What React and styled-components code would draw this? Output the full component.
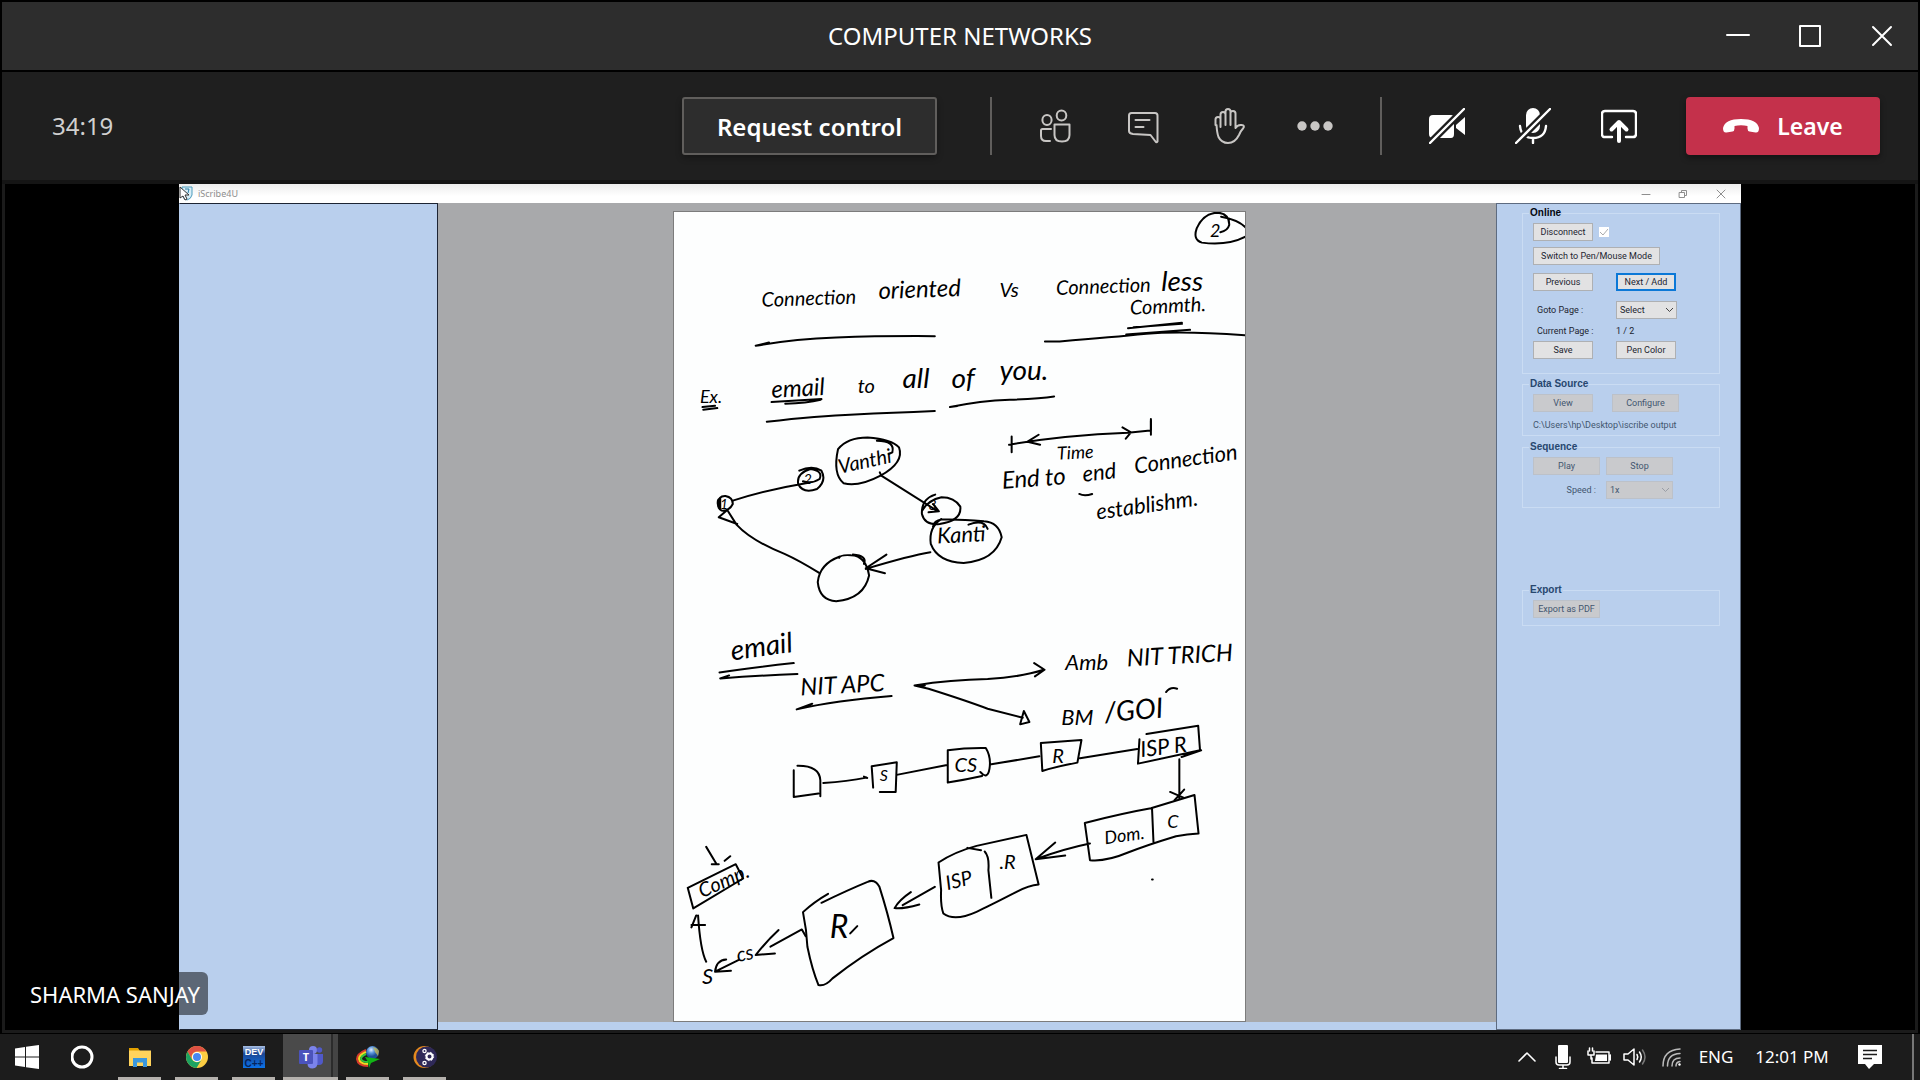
import React from "react";
import styled, { createGlobalStyle, css } from "styled-components";

const ui = `"Noto Sans", "Open Sans", sans-serif`;
const forms = `Roboto, "Liberation Sans", sans-serif`;

const GlobalStyle = createGlobalStyle`
  *, *::before, *::after { box-sizing: border-box; }
  body { margin: 0; background: #000; font-family: ${ui}; }
  button, input, select { font: inherit; margin: 0; }
  svg { display: block; }
`;

/* ---------- shell ---------- */

const Screen = styled.div`
  height: 100vh;
  display: flex;
  flex-direction: column;
  overflow: hidden;
  color: #fff;
`;

const Meeting = styled.div`
  flex: 1;
  min-height: 0;
  display: flex;
  flex-direction: column;
  padding: 2px 2px 1px;
`;

const TitleBar = styled.header`
  height: 68px;
  display: grid;
  grid-template-columns: 1fr auto 1fr;
  align-items: center;
  background: #2d2d2d;
`;

const Title = styled.h1`
  grid-column: 2;
  margin: 0;
  font-size: 24px;
  line-height: 32px;
  font-weight: 400;
`;

const WindowButtons = styled.div`
  justify-self: end;
  display: flex;
`;

const BareButton = styled.button`
  display: flex;
  align-items: center;
  justify-content: center;
  padding: 0;
  border: 0;
  background: none;
  color: inherit;
`;

const WindowButton = styled(BareButton)`
  width: ${(p) => p.$w}px;
  height: ${(p) => p.$h}px;
`;

const Toolbar = styled.div`
  height: 112px;
  margin-top: 2px;
  padding: 0 38px 0 50px;
  display: flex;
  align-items: center;
  background: #1f1f1f;
  border-bottom: 4px solid #151515;
`;

const Timer = styled.time`
  margin-right: auto;
  font-size: 24px;
  line-height: 32px;
  color: #d0d0d0;
`;

const RequestButton = styled.button`
  width: 255px;
  height: 58px;
  margin-right: 31px;
  border: 2px solid #605e5c;
  border-radius: 3px;
  background: #2d2d2d;
  box-shadow: 0 3px 6px rgba(0, 0, 0, 0.3);
  color: #fff;
  font-size: 24px;
  font-weight: 600;
`;

const Divider = styled.span`
  width: 2px;
  height: 58px;
  margin: 0 22px;
  background: #605e5c;
`;

const ToolButton = styled(BareButton)`
  width: 86px;
  height: 58px;
  color: ${(p) => (p.$bright ? "#fff" : "#c8c6c4")};
`;

const LeaveButton = styled.button`
  width: 194px;
  height: 58px;
  margin-left: 24px;
  display: flex;
  align-items: center;
  justify-content: center;
  gap: 18px;
  border: 0;
  border-radius: 4px;
  background: #c4314b;
  box-shadow: 0 3px 6px rgba(0, 0, 0, 0.4);
  color: #fff;
  font-size: 23px;
  font-weight: 600;
`;

const Stage = styled.main`
  position: relative;
  flex: 1;
  min-height: 0;
  display: flex;
  justify-content: center;
  background: #000;
  border: solid #1b1b1b;
  border-width: 0 3px 3px;
`;

const NameTag = styled.div`
  position: absolute;
  left: 13px;
  bottom: 15px;
  padding: 6px 8px 5px 12px;
  border-radius: 6px;
  background: rgba(0, 0, 0, 0.5);
  font-size: 22px;
  line-height: 32px;
`;

/* ---------- shared desktop application ---------- */

const Shared = styled.section`
  height: 100%;
  aspect-ratio: 1562 / 846;
  display: flex;
  flex-direction: column;
  background: #b9cfed;
  font-family: ${forms};
  font-size: 9px;
  line-height: 14px;
  color: #1c2430;
`;

const AppBar = styled.div`
  height: 19px;
  display: flex;
  align-items: center;
  background: linear-gradient(#ececec, #fff 12px);
  color: #8e8e8e;
`;

const AppName = styled.span`
  margin: 0 auto 0 5px;
  font-family: ${ui};
  font-size: 9px;
`;

const Body = styled.div`
  flex: 1;
  min-height: 0;
  display: flex;
`;

const LeftPane = styled.aside`
  width: 259px;
  border: 1px solid #1d2433;
  border-left-color: #b9cfed;
`;

const Canvas = styled.div`
  flex: 1;
  min-width: 0;
  display: flex;
  justify-content: center;
  padding: 8px 15px 0 0;
  background: #a8a9ab;
  border-bottom: 8px solid #b9cfed;
`;

const Board = styled.div`
  height: 100%;
  aspect-ratio: 573 / 811;
  border: 1px solid #7c7c7c;
  background: #fdfefe;
`;

const Ink = styled.svg`
  width: 100%;
  height: 100%;
  fill: none;
  stroke: #000;
  stroke-width: 2px;
  stroke-linecap: round;
  stroke-linejoin: round;

  path, ellipse { vector-effect: non-scaling-stroke; }

  text {
    font-family: Lato, sans-serif;
    font-style: italic;
    font-weight: 400;
    fill: #000;
    stroke: none;
  }
`;

const RightPane = styled.aside`
  width: 245px;
  padding: 2px 20px 0 25px;
  border: 1px solid #5d6b80;
`;

const Group = styled.fieldset`
  margin: 0 0 ${(p) => p.$after || 3}px;
  padding: 0 0 ${(p) => p.$foot}px 10px;
  border: 1px solid #cadcf3;
  color: ${(p) => (p.disabled ? "#43566f" : "#1c2430")};

  legend {
    margin-left: -4px;
    padding: 0 1px;
    line-height: 14px;
    font-family: "Liberation Sans", sans-serif;
    font-size: 10px;
    font-weight: 700;
    color: ${(p) => (p.disabled ? "#27476f" : "#05080f")};
  }
`;

const Row = styled.div`
  height: ${(p) => p.$h || 24}px;
  display: flex;
  align-items: center;
  gap: ${(p) => p.$gap || 6}px;
`;

const Cell = styled.label`
  width: ${(p) => p.$w}px;
  padding: 0 4px;
  white-space: nowrap;
  text-align: ${(p) => p.$align || "left"};
`;

const control = css`
  height: 18px;
  width: ${(p) => p.$w}px;
  border: 1px solid #aeb0b3;
  border-radius: 0;
  background: #e2e2e3;
  color: #1c2430;
  &:disabled {
    background: #c9cacd;
    border-color: #bcc1c9;
    color: #43566f;
    opacity: 1;
  }
`;

const FormButton = styled.button`
  ${control}
  padding: 0;
  white-space: nowrap;
  ${(p) => p.$focus && css`border: 2px solid #0b78d7;`}
`;

const SelectWrap = styled.span`
  display: grid;
  align-items: center;
  > * { grid-area: 1 / 1; }
  svg { justify-self: end; margin-right: 3px; pointer-events: none; }
`;

const FormSelect = styled.select`
  ${control}
  appearance: none;
  padding: 0 3px;
`;

const CheckBox = styled.input`
  appearance: none;
  width: 10px;
  height: 10px;
  background: #fff;
`;

const CheckWrap = styled(SelectWrap)`
  svg { margin-right: 1px; }
`;

/* ---------- taskbar ---------- */

const Taskbar = styled.footer`
  height: 46px;
  display: flex;
  align-items: stretch;
  background: #1c1c1c;
`;

const TaskButton = styled(BareButton)`
  width: ${(p) => p.$w}px;
`;

const AppButton = styled(BareButton)`
  width: 43px;
  margin: 0 7px;
  padding-top: 3px;
  border-bottom: 3px solid #b5b1ad;
`;

const ActiveApp = styled(AppButton)`
  width: 55px;
  margin: 0 1px;
  background: linear-gradient(90deg, #4a4a4a 48px, #2b2b2b 48px, #2b2b2b 50px, #444 50px);
`;

const Tray = styled.div`
  margin-left: auto;
  display: flex;
  align-items: center;
  font-size: 17px;
  line-height: 24px;
`;

const TrayButton = styled(BareButton)`
  width: ${(p) => p.$w}px;
  height: 46px;
  white-space: nowrap;
`;

const ShowDesktop = styled(BareButton)`
  width: 8px;
  height: 46px;
  margin-left: 15px;
  border-left: 2px solid #777;
`;

/* ---------- drawings ---------- */

const Line = ({ size = 36, sw = 2, children, ...rest }) => (
  <svg width={size} height={size} viewBox={`0 0 ${size} ${size}`} fill="none" stroke="currentColor"
    strokeWidth={sw} strokeLinejoin="round" strokeLinecap="round" aria-hidden="true" {...rest}>
    {children}
  </svg>
);

const PeopleIcon = () => (
  <Line>
    <ellipse cx="8" cy="12" rx="4.600" ry="5" />
    <ellipse cx="22.500" cy="7.500" rx="4.800" ry="5" />
    <path d="M12 21H3.500q-1.500 0-1.500 1.500V28q0 5 5 5h4M15.500 16.500h15V27q0 6.500-7.500 6.500t-7.500-6.500z" />
  </Line>
);
const ChatIcon = () => (
  <Line>
    <path d="M6.500 5h23.500q2.500 0 2.500 2.500V33.500q-1 1.500-2 0L25.500 27 8 26Q4 25.500 4 23V7.500Q4 5 6.500 5ZM10.500 12h14M10.500 19h8" />
  </Line>
);
const HandIcon = () => (
  <Line>
    <path d="M4.500 17V11.500q0-2.500 2.500-2.500T9.500 11V6.500Q9.500 4 12 4t2.500 2.500V3.500Q14.500 1 17 1t2.500 2.500V5Q19.500 3 22 3t2.500 2.500V20q2-3.500 6-3 4 .5 1.500 3.500-2 2-4 6.500-4 8-11 8-6.500 0-9.500-6-1.500-4-2-12ZM9.500 11v8M14.500 6v11M19.500 5v12" />
  </Line>
);
const MoreIcon = () => (
  <svg width="38" height="12" viewBox="0 0 38 12" fill="currentColor" aria-hidden="true">
    <circle cx="6" cy="6" r="4.700" /><circle cx="19" cy="6" r="4.700" /><circle cx="32" cy="6" r="4.700" />
  </svg>
);
const CameraOffIcon = () => (
  <Line>
    <path fill="currentColor" stroke="none" d="M4 7h18q3 0 3 3v16q0 4-3 4H4q-4 0-4-4V11q0-4 4-4ZM27 17l9-8v18l-9-7Z" />
    <path stroke="#1f1f1f" strokeWidth="7" d="M0 36 36 0" />
    <path strokeWidth="2.400" d="M1 35 35 1" />
  </Line>
);
const MicOffIcon = () => (
  <Line>
    <rect x="11" y="0" width="14" height="25" rx="7" fill="currentColor" stroke="none" />
    <path d="M5 18q1 12 13 12t13-12M18 30v5" strokeWidth="2.400" />
    <path stroke="#1f1f1f" strokeWidth="7" d="M0 36 36 0" />
    <path strokeWidth="2.400" d="M1 35 35 1" />
  </Line>
);
const ShareIcon = () => (
  <Line sw={2.4}>
    <path d="M11 29H4q-3 0-3-3V6q0-3 3-3h28q3 0 3 3v20q0 3-3 3h-7" />
    <path strokeWidth="4" d="M18 33V15M10.500 21.500 18 14l7.500 7.500" />
  </Line>
);
const PhoneIcon = () => (
  <svg width="36" height="14" viewBox="0 0 36 14" fill="currentColor" aria-hidden="true">
    <path d="M0 9Q2 0 18 0t18 9q0 5-3.500 4.500l-6-1Q24.500 12 24.500 9.500V7q-6.500-1.500-13 0v2.500q0 2.500-2 3l-6 1Q0 14 0 9Z" />
  </svg>
);

const BoardInk = () => (
  <Ink viewBox="674 211 572 810" preserveAspectRatio="none" role="img" aria-label="Handwritten lecture notes">
    {/* page number, headings and underlines */}
    <g transform="translate(670 199) scale(.37 .3333)">
      <path d="M1492 50Q1540 60 1558 82M1558 110Q1510 138 1440 128 1415 120 1426 85 1445 38 1484 38 1515 42 1514 75 1510 92 1490 97" />
      <path d="M268 428 232 438Q330 418 450 413T717 409M1015 425H1055Q1200 412 1290 402T1558 406M1240 385 1386 369M1235 404 1408 390M1255 382 1386 372" />
      <path d="M88 622 122 618M90 630 128 625M275 607 410 598M312 612Q370 610 408 600M262 666Q400 648 500 644T717 634M778 619 758 622Q840 603 920 600T1040 590" />
      <path d="M1302 658V690" />
    </g>
    {/* ring of hosts and the timeline */}
    <g transform="translate(670 420) scale(.37 .3333)">
      <path d="M1302 0V42M925 47V95M918 72Q1060 44 1240 36L1300 29M998 42 968 63 1002 72M1225 20 1248 35 1234 54" />
      <path d="M170 240Q270 205 375 186M350 150Q385 132 410 150 425 180 398 205 360 220 347 190 342 158 380 145 415 150 405 175 385 190 360 182" />
      <path d="M455 85Q480 50 535 50 600 55 620 80 635 125 570 165 510 200 470 188 440 160 455 85M560 60Q610 60 602 95L592 100" />
      <path d="M568 155 572 165 725 272M712 250 728 272 700 275" />
      <path d="M718 222Q680 235 682 280 690 315 730 310 790 300 786 258 770 230 735 230 700 238 684 268" />
      <path d="M735 295Q700 320 706 370 725 425 795 427 880 420 898 350 890 305 850 302 780 295 735 297 715 300 712 318M808 312Q850 295 860 325" />
      <path d="M705 395Q650 405 530 445M586 402 530 443 582 458" />
      <path d="M460 408Q405 430 400 485 405 540 450 542 525 535 539 465 530 405 490 404 460 402 458 412M495 402Q535 405 525 430" />
      <path d="M405 458Q350 420 310 400 220 360 180 312L155 268 132 290 182 310M130 250Q130 225 150 226 170 230 170 250 160 272 140 270 126 262 130 238M132 235V262M136 232V266" />
      <path d="M1108 220Q1122 228 1143 220" />
    </g>
    {/* mail route, upper half */}
    <g transform="translate(670 610) scale(.37 .3333)">
      <path d="M134 186Q220 172 335 158M160 195 136 204Q240 195 345 191M385 280 343 297Q450 270 600 257" />
      <path d="M690 225H662Q760 208 860 206 950 200 1012 178M986 158 1014 178 988 198M662 225 700 235Q800 270 860 295L955 322M948 342 958 302 973 335Z" />
      <path d="M335 480V560L402 550M407 558V510Q405 465 345 466M415 518Q480 514 532 502M525 499 534 503" />
      <path d="M550 532 546 468 614 456 611 545H568M617 493 750 464M752 517V420Q800 412 855 413 870 440 865 475 860 510 840 485M752 517Q800 508 845 497M870 462 1000 438" />
      <path d="M1004 398 1114 389 1103 457Q1050 468 1008 482ZM1110 444 1265 416M1271 387 1267 460 1435 420 1430 346 1290 371M1385 440 1438 420" />
      <path d="M1379 447V565M1354 545 1390 562M1392 538 1366 570" />
      <path d="M1343 245Q1355 228 1373 235" />
    </g>
    {/* mail route, lower half */}
    <g transform="translate(670 790) scale(.37 .3333)">
      <path d="M1123 98Q1230 68 1302 54L1420 14 1431 130Q1400 132 1370 138 1290 165 1240 187 1180 215 1137 210ZM1305 54 1309 156M1137 160Q1070 175 990 207M1043 157 990 207 1070 196" />
      <path d="M727 217Q770 185 830 167L965 134 998 283Q970 285 930 310 860 350 830 365 770 395 740 370 732 345 734 300ZM805 173 842 180M852 184Q865 200 862 240L870 323M717 290 630 345M652 306Q620 330 608 354 630 357 675 343" />
      <path d="M428 311Q390 335 360 366 370 420 372 470 385 540 402 585 420 590 440 565 520 495 605 444 590 370 567 290 555 265 535 275 480 300 410 338" />
      <path d="M367 438 357 418 272 470M294 420Q260 455 232 495L284 490M185 510 122 545 165 542M122 545Q125 510 152 508" />
      <path d="M48 293 178 222 198 265 63 355ZM98 170 125 220M113 222H132M148 212 163 198M98 515Q82 480 76 376M58 412 71 376M58 405H95M1305 268H1307M488 430 507 408" />
    </g>
    <g fontSize="20">
      <text x="1211" y="236" fontSize="18">2</text>
      <text x="762" y="306" transform="rotate(-2 762 306)">Connection</text>
      <text x="879" y="298" transform="rotate(-2 879 298)" fontSize="24">oriented</text>
      <text x="1000" y="296">Vs</text>
      <text x="1057" y="294" transform="rotate(-2 1057 294)">Connection</text>
      <text x="1162" y="290" fontSize="28">less</text>
      <text x="1131" y="314" transform="rotate(-3 1131 314)">Commth.</text>
      <text x="700" y="402" fontSize="18">Ex.</text>
      <text x="772" y="397" transform="rotate(-3 772 397)" fontSize="24">email</text>
      <text x="858" y="392">to</text>
      <text x="903" y="387" fontSize="28">all</text>
      <text x="952" y="387" fontSize="28">of</text>
      <text x="1000" y="379" fontSize="28">you.</text>

      <text x="840" y="473" transform="rotate(-12 840 473)">Vanthi</text>
      <text x="804" y="483" fontSize="14">2</text>
      <text x="929" y="509" fontSize="14">3</text>
      <text x="720" y="508" fontSize="14">1</text>
      <text x="938" y="543" transform="rotate(-3 938 543)" fontSize="22">Kanti</text>
      <text x="1058" y="459" transform="rotate(-3 1058 459)" fontSize="18">Time</text>
      <text x="1003" y="488" transform="rotate(-4 1003 488)" fontSize="24">End to</text>
      <text x="1084" y="481" transform="rotate(-6 1084 481)" fontSize="22">end</text>
      <text x="1136" y="473" transform="rotate(-8 1136 473)" fontSize="22">Connection</text>
      <text x="1098" y="519" transform="rotate(-8 1098 519)" fontSize="22">establishm.</text>

      <text x="732" y="660" transform="rotate(-8 732 660)" fontSize="28">email</text>
      <text x="801" y="695" transform="rotate(-3 801 695)" fontSize="24">NIT APC</text>
      <text x="1066" y="670" fontSize="22">Amb</text>
      <text x="1128" y="666" transform="rotate(-3 1128 666)" fontSize="24">NIT TRICH</text>
      <text x="1062" y="725" fontSize="22">BM</text>
      <text x="1106" y="722" transform="rotate(-5 1106 722)" fontSize="28">/GOI</text>
      <text x="880" y="781" fontSize="16">S</text>
      <text x="955" y="772">CS</text>
      <text x="1053" y="763">R</text>
      <text x="1142" y="757" transform="rotate(-7 1142 757)" fontSize="22">ISP R</text>

      <text x="1106" y="844" transform="rotate(-8 1106 844)" fontSize="18">Dom.</text>
      <text x="1168" y="828" fontSize="18">C</text>
      <text x="948" y="890" transform="rotate(-14 948 890)">ISP</text>
      <text x="1000" y="869">.R</text>
      <text x="830" y="938" fontSize="32">R</text>
      <text x="702" y="898" transform="rotate(-24 702 898)">Comp.</text>
      <text x="738" y="962" transform="rotate(-12 738 962)">cs</text>
      <text x="702" y="984" fontSize="22">S</text>
    </g>
  </Ink>
);

const Chevron = ({ faded }) => (
  <svg width="9" height="6" viewBox="0 0 9 6" fill="none" stroke={faded ? "#9a9ea6" : "#444"} aria-hidden="true">
    <path d="M1 1l3.500 3.500L8 1" />
  </svg>
);

const AppLogo = () => (
  <svg width="14" height="16" viewBox="0 0 14 16" aria-hidden="true">
    <path d="M3 1h10v8q-1 4-5 5-4-1-5-5Z" fill="#d9eef7" stroke="#4d9dbd" />
    <path d="M6 3h4L9 7" fill="none" stroke="#2c7fa5" />
    <path d="M1 1v11l3-2 2 4 2-1-2-4h4Z" fill="#fff" stroke="#333" />
  </svg>
);

/* ---------- page ---------- */

function Online() {
  return (
    <Group $foot={11}>
      <legend>Online</legend>
      <Row>
        <FormButton $w={60}>Disconnect</FormButton>
        <CheckWrap>
          <CheckBox type="checkbox" defaultChecked disabled aria-label="Connected" />
          <svg width="8" height="8" viewBox="0 0 8 8" fill="none" stroke="#a9abad"><path d="M0 4l3 3 5-6" /></svg>
        </CheckWrap>
      </Row>
      <Row><FormButton $w={127}>Switch to Pen/Mouse Mode</FormButton></Row>
      <Row $h={28} $gap={23}>
        <FormButton $w={60}>Previous</FormButton>
        <FormButton $w={60} $focus>Next / Add</FormButton>
      </Row>
      <Row $h={28} $gap={23}>
        <Cell $w={60} htmlFor="goto">Goto Page :</Cell>
        <SelectWrap>
          <FormSelect id="goto" $w={61}><option>Select</option></FormSelect>
          <Chevron />
        </SelectWrap>
      </Row>
      <Row $h={14} $gap={23}>
        <Cell as="span" $w={60}>Current Page :</Cell>
        <span>1 / 2</span>
      </Row>
      <Row $gap={23}>
        <FormButton $w={60}>Save</FormButton>
        <FormButton $w={60}>Pen Color</FormButton>
      </Row>
    </Group>
  );
}

export default function App() {
  return (
    <Screen>
      <GlobalStyle />
      <Meeting>
        <TitleBar>
          <Title>COMPUTER NETWORKS</Title>
          <WindowButtons>
            <WindowButton $w={72} $h={68} aria-label="Minimize"><Line size={24}><path d="M1 11h22" /></Line></WindowButton>
            <WindowButton $w={72} $h={68} aria-label="Maximize"><Line size={24}><path d="M2 2h20v20H2z" /></Line></WindowButton>
            <WindowButton $w={72} $h={68} aria-label="Close"><Line size={24}><path d="M3 3l18 18M21 3 3 21" /></Line></WindowButton>
          </WindowButtons>
        </TitleBar>

        <Toolbar>
          <Timer>34:19</Timer>
          <RequestButton>Request control</RequestButton>
          <Divider />
          <ToolButton aria-label="Participants"><PeopleIcon /></ToolButton>
          <ToolButton aria-label="Conversation"><ChatIcon /></ToolButton>
          <ToolButton aria-label="Raise hand"><HandIcon /></ToolButton>
          <ToolButton aria-label="More actions"><MoreIcon /></ToolButton>
          <Divider />
          <ToolButton $bright aria-label="Turn camera on"><CameraOffIcon /></ToolButton>
          <ToolButton $bright aria-label="Unmute"><MicOffIcon /></ToolButton>
          <ToolButton $bright aria-label="Share"><ShareIcon /></ToolButton>
          <LeaveButton><PhoneIcon />Leave</LeaveButton>
        </Toolbar>

        <Stage>
          <Shared>
            <AppBar>
              <AppLogo />
              <AppName>iScribe4U</AppName>
              <WindowButton $w={37} $h={19} aria-label="Minimize"><Line size={10} sw={1}><path d="M1 5.500h8" /></Line></WindowButton>
              <WindowButton $w={37} $h={19} aria-label="Restore"><Line size={10} sw={1}><path d="M1.500 3.500h5v5h-5zM3.500 3V1.500h5v5H7" /></Line></WindowButton>
              <WindowButton $w={40} $h={19} aria-label="Close"><Line size={10} sw={1}><path d="M1 1l8 8M9 1 1 9" /></Line></WindowButton>
            </AppBar>
            <Body>
              <LeftPane />
              <Canvas><Board><BoardInk /></Board></Canvas>
              <RightPane>
                <Online />
                <Group disabled $foot={0} $after={4}>
                  <legend>Data Source</legend>
                  <Row $gap={19}>
                    <FormButton $w={60}>View</FormButton>
                    <FormButton $w={67}>Configure</FormButton>
                  </Row>
                  <Row $h={20}>C:\Users\hp\Desktop\iscribe output</Row>
                </Group>
                <Group disabled $foot={5} $after={75}>
                  <legend>Sequence</legend>
                  <Row>
                    <FormButton $w={67}>Play</FormButton>
                    <FormButton $w={67}>Stop</FormButton>
                  </Row>
                  <Row>
                    <Cell $w={67} $align="right" htmlFor="speed">Speed :</Cell>
                    <SelectWrap>
                      <FormSelect id="speed" $w={67}><option>1x</option></FormSelect>
                      <Chevron faded />
                    </SelectWrap>
                  </Row>
                </Group>
                <Group disabled $foot={4}>
                  <legend>Export</legend>
                  <Row><FormButton $w={67}>Export as PDF</FormButton></Row>
                </Group>
              </RightPane>
            </Body>
          </Shared>
          <NameTag>SHARMA SANJAY</NameTag>
        </Stage>
      </Meeting>

      <Taskbar>
        <TaskButton $w={54} aria-label="Start">
          <svg width="24" height="24" viewBox="0 0 24 24" fill="#fff"><path d="M0 3.500 10 2v9.500H0zM11 1.800 24 0v11.500H11zM0 12.500h10V22L0 20.500zM11 12.500h13V24l-13-1.800z" /></svg>
        </TaskButton>
        <TaskButton $w={57} aria-label="Cortana">
          <svg width="24" height="24" viewBox="0 0 24 24" fill="none" stroke="#fff" strokeWidth="3"><circle cx="11" cy="12" r="10" /></svg>
        </TaskButton>
        <AppButton aria-label="File Explorer">
          <svg width="24" height="24" viewBox="0 0 24 24">
            <path d="M1 3h9l2 3v4H1z" fill="#e2a100" /><path d="M1 5.500h22V21H1z" fill="#ffd35c" />
            <path d="M5 13h14v9h-4v-4.500H9V22H5z" fill="#3b97dd" />
          </svg>
        </AppButton>
        <AppButton aria-label="Chrome">
          <svg width="24" height="24" viewBox="0 0 24 24">
            <circle cx="12" cy="12" r="11" fill="#fccd43" />
            <path d="M2.500 6.500a11 11 0 0 1 19 0H12a5.500 5.500 0 0 0-4.800 8.200Z" fill="#dd5144" />
            <path d="M2.500 6.500A11 11 0 0 0 11.500 23l5-8.300a5.500 5.500 0 0 1-9.300 0Z" fill="#1ca261" />
            <circle cx="12" cy="12" r="5" fill="#fff" /><circle cx="12" cy="12" r="4" fill="#4688f1" />
          </svg>
        </AppButton>
        <AppButton aria-label="Dev-C++">
          <svg width="24" height="24" viewBox="0 0 24 24">
            <defs><linearGradient id="dev" x2="0" y2="1"><stop offset="0" stopColor="#a9c0e4" /><stop offset=".35" stopColor="#1c4795" /><stop offset="1" stopColor="#0b72e8" /></linearGradient></defs>
            <path d="M1 1h22v22H1z" fill="url(#dev)" />
            <text x="12" y="10" fill="#fff" fontSize="9" fontWeight="700" textAnchor="middle" fontFamily="Liberation Sans, sans-serif">DEV</text>
            <text x="12" y="22" fill="#06245c" fontSize="10" fontWeight="700" textAnchor="middle" fontFamily="Liberation Sans, sans-serif">C++</text>
          </svg>
        </AppButton>
        <ActiveApp aria-label="Microsoft Teams">
          <svg width="24" height="24" viewBox="0 0 24 24">
            <circle cx="14" cy="5" r="4" fill="#7b83eb" /><circle cx="20.500" cy="5" r="2.700" fill="#5059c9" />
            <path d="M17 9h7v7q0 4-4 4h-3z" fill="#5059c9" /><path d="M9 9h9.500v9q0 5-5 5.500-5 0-5-5z" fill="#7b83eb" />
            <rect x="0" y="5" width="14" height="14" rx="1" fill="#4b53bc" />
            <text x="7" y="16" fill="#fff" fontSize="11" fontWeight="700" textAnchor="middle" fontFamily="Open Sans, sans-serif">T</text>
          </svg>
        </ActiveApp>
        <AppButton aria-label="Internet Download Manager">
          <svg width="24" height="24" viewBox="0 0 24 24">
            <defs><radialGradient id="globe" cx=".4" cy=".3"><stop offset="0" stopColor="#e4efff" /><stop offset=".5" stopColor="#5a96dc" /><stop offset="1" stopColor="#1f4f96" /></radialGradient></defs>
            <circle cx="16.500" cy="7.500" r="6.500" fill="url(#globe)" />
            <path d="M17 2q5 1 6 4l-1 5-3-4z" fill="#d6c04a" opacity=".7" />
            <g fill="none" strokeWidth="2"><path d="M10 5Q1 9 1 14q1 7 11 7" stroke="#d93a2c" /><path d="M10 7Q3 10 3 14q1 5 9 5" stroke="#f4d624" /><path d="M10 9Q5 11 5 14q1 3 7 3" stroke="#35c43b" /></g>
            <path d="M9 12l15 2-9 4-2 5-1-6z" fill="#12b416" />
          </svg>
        </AppButton>
        <AppButton aria-label="Settings helper">
          <svg width="24" height="24" viewBox="0 0 24 24">
            <circle cx="11.500" cy="12" r="11" fill="#e58a1f" /><circle cx="13.500" cy="12" r="10.500" fill="#2f2958" />
            <g fill="none" stroke="#fff"><circle cx="16.500" cy="11.500" r="3" strokeWidth="2" /><circle cx="16.500" cy="11.500" r="4.200" strokeWidth="1" strokeDasharray="1.600 1.700" /><circle cx="11.500" cy="6" r="1.600" strokeWidth="1.300" /><circle cx="11.500" cy="18" r="1.600" strokeWidth="1.300" /></g>
          </svg>
        </AppButton>

        <Tray>
          <TrayButton $w={36} aria-label="Show hidden icons"><Line size={24} sw={1.6}><path d="M4 16l8-8 8 8" /></Line></TrayButton>
          <TrayButton $w={36} aria-label="Microphone in use">
            <Line size={24} sw={1.5}><rect x="7" y="0" width="10" height="18" rx="1" fill="#fff" stroke="none" /><path d="M5 12v5q0 3 3 3h8q3 0 3-3v-5M12 20v3M8.500 23.500h7" /></Line>
          </TrayButton>
          <TrayButton $w={36} aria-label="Battery charging">
            <Line size={24} sw={1.5}><path d="M9 7h13v11H5v-5M23.500 10v5M1 6v4h6V6M2.500 6V3M5.500 6V3M4 10v4" /><path d="M9 9.500h11v6.500H8z" fill="#fff" stroke="none" /></Line>
          </TrayButton>
          <TrayButton $w={36} aria-label="Volume">
            <Line size={24} sw={1.5}><path d="M1 9h4l6-5v16l-6-5H1zM14 9.500q1.500 2.500 0 5M16.500 7q3.500 5 0 10" /><path d="M19.500 5q5 7 0 14" stroke="#777" /></Line>
          </TrayButton>
          <TrayButton $w={38} aria-label="Network">
            <Line size={24} sw={1.5}><path d="M3 21Q3 5 20 4M7.500 21Q7.500 9 20 8.500M12 21q0-8 8-8M16 21q0-4 4-4.500" stroke="#bbb" /><circle cx="19.500" cy="19.500" r="1.200" fill="#fff" stroke="none" /></Line>
          </TrayButton>
          <TrayButton $w={50} aria-label="Input language">ENG</TrayButton>
          <TrayButton $w={102}>12:01 PM</TrayButton>
          <TrayButton $w={54} aria-label="Notifications">
            <svg width="24" height="24" viewBox="0 0 24 24"><path d="M0 0h24v19h-8l-5 5-4-5H0z" fill="#fff" /><path d="M5 5.500h14M5 9.500h14M5 13.500h9" stroke="#1c1c1c" strokeWidth="1.500" /></svg>
          </TrayButton>
          <ShowDesktop aria-label="Show desktop" />
        </Tray>
      </Taskbar>
    </Screen>
  );
}
